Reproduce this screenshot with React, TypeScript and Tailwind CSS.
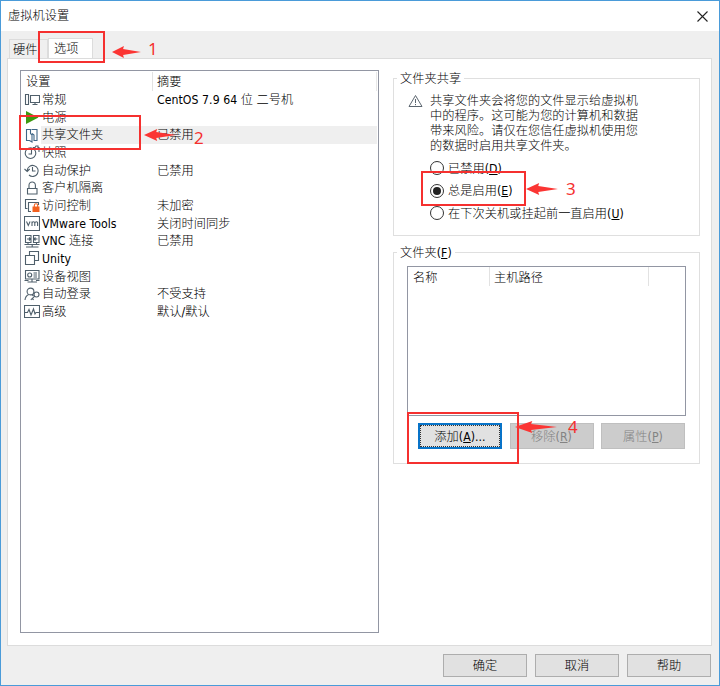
import React from "react";
import { clsx } from "clsx";

type Setting = {
  name: string;
  summary?: string;
  icon: React.ReactNode;
  selected?: boolean;
};

const settings: Setting[] = [
  {
    name: "常规",
    summary: "CentOS 7.9 64 位 二号机",
    icon: <path d="M1.500 3.500h3v10h-3zM6.500 4.500h9v7h-9zM11 11.500v2M8.500 13.500h5" />,
  },
  {
    name: "电源",
    icon: <path d="M2 2 14.500 8.500 2 15z" fill="#3c990f" stroke="none" />,
  },
  {
    name: "共享文件夹",
    summary: "已禁用",
    selected: true,
    icon: <path d="M2.500 2.500h4v4l1.500 1.500v7l-2.500-1.500h-3zM7.500 2.500h5.500v11h-3V8L8 6.500" stroke="#3f6787" />,
  },
  {
    name: "快照",
    icon: (
      <>
        <circle cx="6.500" cy="9.200" r="5.300" />
        <path d="M7.500 6v4H4.500M9 3.500h2l1-1.500h2v1.500h1v4.500" />
      </>
    ),
  },
  {
    name: "自动保护",
    summary: "已禁用",
    icon: (
      <>
        <path d="M3.200 8.500a5.500 5.500 0 1 1 1.800 4.500M.5 7l2.700 2.500L5.700 7" />
        <path d="M8.500 5v4h3" />
      </>
    ),
  },
  {
    name: "客户机隔离",
    icon: <path d="M3.500 8.500h9.500v5.500H3.500zM5 8.500V5.200a3.200 3.200 0 0 1 6.400 0v3.300" />,
  },
  {
    name: "访问控制",
    summary: "未加密",
    icon: (
      <>
        <path d="M3.500 11.500h-2v-9h11M7 14.500H4.500v-9h10V8" />
        <path d="M8.500 9.500h7V15h-7z" fill="#f2601f" stroke="none" />
        <path d="M10.300 10V8.500a1.700 1.700 0 0 1 3.400 0V10" stroke="#f2601f" />
      </>
    ),
  },
  {
    name: "VMware Tools",
    summary: "关闭时间同步",
    icon: (
      <>
        <path d="M.5 1.500h15v14H.5z" />
        <path d="m2.500 6.500 1.800 4 1.800-4M8 11V6.500M8 8c.5-1.500 2.800-1.700 2.800 0v3M10.800 8c.5-1.500 2.800-1.700 2.800 0v3" />
      </>
    ),
  },
  {
    name: "VNC 连接",
    summary: "已禁用",
    icon: (
      <path d="M1.500 2.500h5.500v7H1.500zM9.500 2.500H15v7H9.500zM3 6h4M9.500 6h4M5 4.500 6.500 6 5 7.500M11.500 4.500 10 6l1.500 1.500M.5 11.500h15M4 9.500v2M12.500 9.500v2M2 14h12.500M8.200 11.500V14" />
    ),
  },
  {
    name: "Unity",
    icon: <path d="M1.500 5.500h9v9h-9zM5.500 5.500v-4h9v9h-4" />,
  },
  {
    name: "设备视图",
    icon: (
      <>
        <path d="M1.500 2.500H15v8.500H1.500zM9.500 5H13M9.500 7H13M9.500 9H13M8 11v2.500M3.500 14h9.500M.5 12.500h4M12 12.500h3.500" />
        <circle cx="5.700" cy="7" r="2" />
      </>
    ),
  },
  {
    name: "自动登录",
    summary: "不受支持",
    icon: (
      <>
        <circle cx="6.500" cy="5.500" r="3.400" />
        <path d="M1 14c.3-3 1.500-4.500 3.700-5.500M8 8.500l1.500 1.500" />
        <circle cx="12.500" cy="8.500" r="2.500" />
        <path d="m10.800 10.200-4 3.600M8.300 12.500l1.300 1.300" />
      </>
    ),
  },
  {
    name: "高级",
    summary: "默认/默认",
    icon: <path d="M.5 2.500h15v12H.5zM.5 9.500h3l1.500-3 2 5.500 2.500-6 1.500 5 1-1.500h3.500" />,
  },
];

function SettingIcon({ children }: { children: React.ReactNode }) {
  return (
    <svg viewBox="0 0 16 17" className="mr-px h-[17px] w-4 shrink-0" fill="none" stroke="#4f5f6b" strokeWidth="1.1">
      {children}
    </svg>
  );
}

function Button({
  children,
  className,
  disabled,
}: {
  children: React.ReactNode;
  className?: string;
  disabled?: boolean;
}) {
  return (
    <button
      type="button"
      disabled={disabled}
      className={clsx(
        "flex w-[84px] shrink-0 items-center justify-center border",
        disabled ? "border-[#bfbfbf] bg-[#cccccc] text-[#838383]" : "bg-[#e1e1e1]",
        className
      )}
    >
      {children}
    </button>
  );
}

function Radio({ label, hotkey, checked }: { label: string; hotkey: string; checked?: boolean }) {
  return (
    <label className="flex h-[22.500px] items-center gap-1">
      <span className="flex size-3.5 items-center justify-center rounded-full border border-[#333333] bg-white">
        {checked && <span className="size-2 rounded-full bg-[#222222]" />}
      </span>
      <span className="pt-px">
        {label}(<u>{hotkey}</u>)
      </span>
    </label>
  );
}

function Legend({ children }: { children: React.ReactNode }) {
  return <legend className="ml-[3px] h-4 px-[3px] leading-[18px]">{children}</legend>;
}

// Red outline with its numbered arrow
function Marker({ box, arrow, number, n }: { box: string; arrow: string; number: string; n: number }) {
  return (
    <>
      <div className={clsx("absolute border-2 border-[#f5302f]", box)} />
      <svg viewBox="0 0 34 12" preserveAspectRatio="none" className={clsx("absolute h-3", arrow)}>
        <path d="M0 6 14 0 13 3 34 6 13 9 14 12z" fill="#fb3533" />
      </svg>
      <span className={clsx("absolute font-['Noto_Sans',sans-serif] text-[17px] leading-5 font-normal text-[#f5302f]", number)}>
        {n}
      </span>
    </>
  );
}

export default function App() {
  return (
    <div className="relative flex h-[686px] w-[720px] flex-col overflow-hidden border border-[#4a9bd9] bg-[#efefef] font-['DejaVu_Sans_Condensed','Noto_Sans_CJK_SC',sans-serif] text-[12.200px] leading-4 font-light tracking-[0.05px] text-black">
      {/* Title bar */}
      <header className="flex h-[30px] shrink-0 items-center justify-between bg-white pr-[11px] pl-[7px]">
        <h1>虚拟机设置</h1>
        <svg viewBox="0 0 11 11" className="size-[11px]" stroke="#222" strokeWidth="1.100">
          <path d="M.5.5l10 10M10.500.5l-10 10" />
        </svg>
      </header>

      {/* Tabs */}
      <nav className="flex h-[27px] shrink-0 items-end pl-2">
        <div className="flex h-[19px] w-[39px] items-center border border-b-0 border-[#dcdcdc] pt-px pl-[3px]">硬件</div>
        <div className="-mb-px flex h-[21px] w-[45px] items-center border border-b-0 border-[#dcdcdc] bg-white pl-[5px]">
          选项
        </div>
      </nav>

      <main className="ml-1.5 flex h-[588px] w-[705px] shrink-0 border border-[#dcdcdc] bg-white pt-[11px] pl-3">
        {/* Settings list */}
        <section className="h-[563px] w-[359px] shrink-0 border border-[#9296a3]">
          <div className="flex h-5 pt-px">
            <div className="w-[132px] border-r border-[#e2e2e2] pt-0.5 pl-[5px]">设置</div>
            <div className="w-[224px] border-r border-[#e8e8e8] pt-0.5 pl-1">摘要</div>
          </div>
          {settings.map((s) => (
            <div key={s.name} className="flex h-[17.660px] items-center pl-[3px]">
              <SettingIcon>{s.icon}</SettingIcon>
              <div className={clsx("flex h-full w-[336px] items-center pt-[0.500px]", s.selected && "bg-[#efefef]")}>
                <span className="w-[116px] pl-px whitespace-nowrap">{s.name}</span>
                <span className="whitespace-nowrap">{s.summary}</span>
              </div>
            </div>
          ))}
        </section>

        <div className="ml-3.5">
          {/* Sharing mode */}
          <fieldset className="h-[166px] w-[307px] border border-[#dfdfdf]">
            <Legend>文件夹共享</Legend>
            <div className="flex pt-[7px] pl-[14px]">
              <svg viewBox="0 0 15 14" className="mt-px mr-[7px] h-3.5 w-[15px]" fill="none" stroke="#5c6670">
                <path d="M7.500 1.500 14 12.500H1zM7.500 5v4M7.500 10v1.200" />
              </svg>
              <p className="pt-px leading-[15px] whitespace-nowrap">
                共享文件夹会将您的文件显示给虚拟机
                <br />
                中的程序。这可能为您的计算机和数据
                <br />
                带来风险。请仅在您信任虚拟机使用您
                <br />
                的数据时启用共享文件夹。
              </p>
            </div>
            <div className="pt-[3px] pl-9">
              <Radio label="已禁用" hotkey="D" />
              <Radio label="总是启用" hotkey="E" checked />
              <Radio label="在下次关机或挂起前一直启用" hotkey="U" />
            </div>
          </fieldset>

          {/* Folders */}
          <fieldset className="mt-2 h-[220px] w-[307px] border border-[#dfdfdf]">
            <Legend>
              文件夹(<u>F</u>)
            </Legend>
            <div className="mt-1.5 ml-[13px] h-[150px] w-[279px] border border-[#9296a3]">
              <div className="flex h-[19px]">
                <div className="w-[82px] border-r border-[#e2e2e2] pt-[3px] pl-[5px]">名称</div>
                <div className="w-[159px] border-r border-[#e2e2e2] pt-[3px] pl-1">主机路径</div>
              </div>
            </div>
            <div className="mt-[7px] ml-6 flex h-[26px] gap-[7.500px]">
              <Button className="border-2 border-[#0873c8] p-0">
                <span className="flex size-full items-center justify-center border border-dotted border-[#333]">
                  <span className="pt-px">
                    添加(<u>A</u>)...
                  </span>
                </span>
              </Button>
              <Button disabled>
                <span className="pt-px">
                  移除(<u>R</u>)
                </span>
              </Button>
              <Button disabled>
                <span className="pt-px">
                  属性(<u>P</u>)
                </span>
              </Button>
            </div>
          </fieldset>
        </div>
      </main>

      <footer className="flex justify-end gap-2 pt-2 pr-2">
        {["确定", "取消", "帮助"].map((label) => (
          <Button key={label} className="h-[23px] border-[#adadad]">
            {label}
          </Button>
        ))}
      </footer>

      <Marker n={1} box="top-[30px] left-[37px] h-[32px] w-[67px]" arrow="top-[45px] left-[111px] w-[29px]" number="top-[38px] left-[147px]" />
      <Marker n={2} box="top-[114px] left-[18px] h-[35px] w-[122px]" arrow="top-[128px] left-[143px] w-[32px]" number="top-[127px] left-[193px]" />
      <Marker n={3} box="top-[170px] left-[420px] h-[35px] w-[105px]" arrow="top-[182px] left-[525px] w-[32px]" number="top-[178px] left-[565px]" />
      <Marker n={4} box="top-[411px] left-[406px] h-[52px] w-[112px]" arrow="top-[420px] left-[514px] w-[42px]" number="top-[416px] left-[567px]" />
    </div>
  );
}
